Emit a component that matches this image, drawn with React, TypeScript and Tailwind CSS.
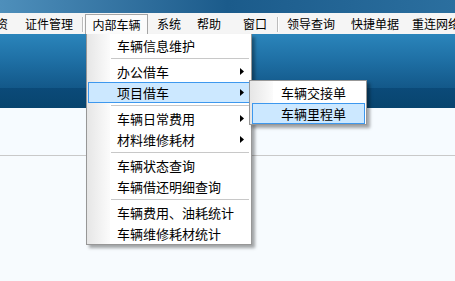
import React from 'react'

const font = "font-['Noto_Sans_CJK_SC','Noto_Sans_CJK_JP',sans-serif]"

function Arrow() {
    return (
        <svg width="4" height="7" viewBox="0 0 4 7" className="absolute right-[7px] top-[7px]">
            <path d="M0 0 L4 3.5 L0 7 Z" fill="#000" />
        </svg>
    )
}

function Item({ label, sub, active }: { label: string; sub?: boolean; active?: boolean }) {
    return (
        <div className="relative h-[21px]">
            {active && (
                <div className="absolute left-[1px] right-[1px] top-0 bottom-0 bg-[#cce8ff] border border-[#3d98ee]" />
            )}
            <div className="relative h-[21px] pl-[30px] flex items-center text-[13px] leading-none text-black whitespace-nowrap">{label}</div>
            {sub && <Arrow />}
        </div>
    )
}

function Sep() {
    return (
        <div className="h-[5px] flex items-center pl-[24px] pr-[2px]">
            <div className="w-full h-[2px] border-t border-[#c8c8c8] border-b-white" />
        </div>
    )
}

function MenuSep() {
    return <div className="w-[2px] h-[15px] border-l border-[#bcbcbc] border-r border-r-white" />
}

function Top({ label, ml }: { label: string; ml: string }) {
    return <span className={`${ml} mt-[5px] shrink-0 whitespace-nowrap`}>{label}</span>
}

export default function App() {
    return (
        <div className={`relative w-[455px] h-[281px] overflow-hidden bg-[#f6fbff] ${font}`}>
            <div className="h-[13px] bg-gradient-to-r from-[#4e8fbb] via-[#1b5b8b] to-[#2b6f9f]" />
            <div className="h-[21px] bg-[#f5f5f5] flex items-start text-[12px] leading-none text-black overflow-hidden">
                <Top label="资" ml="ml-[-4px]" />
                <Top label="证件管理" ml="ml-[17px]" />
                <div className="ml-[9px] mt-[4px] shrink-0"><MenuSep /></div>
                <div className="ml-[1px] mt-[1px] h-[20px] w-[63px] shrink-0 whitespace-nowrap bg-[#fbfbfb] border border-b-0 border-[#a5a5a5] flex justify-center pt-[4px]">
                    内部车辆
                </div>
                <Top label="系统" ml="ml-[9px]" />
                <Top label="帮助" ml="ml-[16px]" />
                <Top label="窗口" ml="ml-[22px]" />
                <div className="ml-[10px] mt-[4px] shrink-0"><MenuSep /></div>
                <Top label="领导查询" ml="ml-[8px]" />
                <Top label="快捷单据" ml="ml-[16px]" />
                <Top label="重连网络" ml="ml-[13px]" />
            </div>
            <div className="h-[54px] bg-gradient-to-b from-[#2b85bb] via-[#1e6fa4] to-[#135889]" />
            <div className="h-[20px] bg-gradient-to-b from-[#0b4a79] to-[#08456f]" />
            <div className="h-[47px]" />
            <div className="h-[2px] border-t border-[#c9c9c9] border-b-[#ffffff]" />
            <div className="h-[124px] bg-[#f7fbfe]" />

            <div className="absolute left-[86px] top-[34px] w-[166px] bg-white border border-t-0 border-[#979797] shadow-[3px_3px_3px_rgba(0,0,0,0.35)]">
                <div className="absolute left-0 top-0 bottom-0 w-[23px] bg-gradient-to-r from-[#e6e6e6] to-[#fbfbfb]" />
                <div className="relative pt-[1px]">
                    <Item label="车辆信息维护" />
                    <Sep />
                    <Item label="办公借车" sub />
                    <Item label="项目借车" sub active />
                    <Sep />
                    <Item label="车辆日常费用" sub />
                    <Item label="材料维修耗材" sub />
                    <Sep />
                    <Item label="车辆状态查询" />
                    <Item label="车辆借还明细查询" />
                    <Sep />
                    <Item label="车辆费用、油耗统计" />
                    <Item label="车辆维修耗材统计" />
                </div>
            </div>

            <div className="absolute left-[249px] top-[80px] w-[118px] bg-white border border-[#979797] shadow-[3px_3px_3px_rgba(0,0,0,0.35)]">
                <div className="absolute left-0 top-0 bottom-0 w-[23px] bg-gradient-to-r from-[#e6e6e6] to-[#fbfbfb]" />
                <div className="relative pt-[1px]">
                    <div className="h-[21px] pl-[31px] flex items-center text-[13px] leading-none whitespace-nowrap">车辆交接单</div>
                    <div className="relative h-[21px]">
                        <div className="absolute left-[2px] right-[1px] top-0 bottom-0 bg-[#cce8ff] border border-[#3d98ee]" />
                        <div className="relative h-[21px] pl-[31px] flex items-center text-[13px] leading-none whitespace-nowrap">车辆里程单</div>
                    </div>
                </div>
            </div>
        </div>
    )
}
